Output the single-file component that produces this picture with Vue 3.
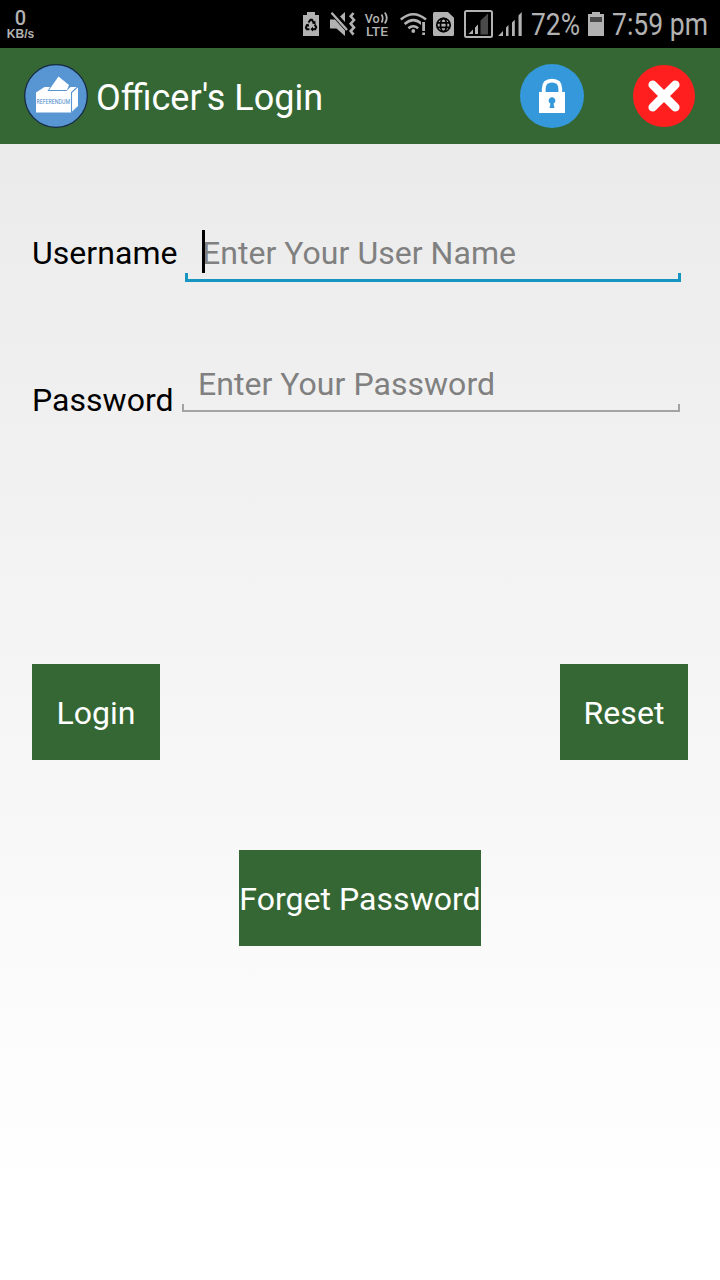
<template>
    <div class="screen">
        <div class="status-bar">
            <div class="net-speed">
                <span class="speed-value">0</span>
                <span class="speed-unit">KB/s</span>
            </div>
            <div class="status-icons">
                <!-- battery saver -->
                <svg class="icon" width="16" height="48" viewBox="303 0 16 48">
                    <path d="M303 15h4v-3h8v3h4v21h-16z" fill="#b2b2b2" />
                    <g fill="none" stroke="#000" stroke-width="2">
                        <path d="M308.500 22.500l2-2.800h1.400l1.800 3" />
                        <path d="M314.700 24.600l1.500 2.700-1 1.900h-3" />
                        <path d="M309.400 29.200h-2.600l-.9-1.800 1.600-2.900" />
                    </g>
                    <path d="M312 23.600l3.600.6-.3-3.600zM313 26.800v4.800l-2.600-2.400zM305.100 25.200l3.400-1.800.7 3.300z" />
                </svg>
                <!-- muted speaker with vibration -->
                <svg class="icon mute" width="26" height="48" viewBox="330 0 26 48">
                    <path d="M330 19.500h5l10 11V36l-8.500-7.500H330z" fill="#b2b2b2" />
                    <path d="M340 16.500l5-4.500v10z" fill="#b2b2b2" />
                    <path d="M331.500 12.800L347 30" stroke="#b2b2b2" stroke-width="2.400" />
                    <path d="M353.500 13l-2.800 3.300 3.300 3.700-3.300 3.700 3.300 3.700-3.300 3.700 2.800 3.500" fill="none" stroke="#b2b2b2" stroke-width="2.600" />
                </svg>
                <svg class="icon volte" width="24" height="48" viewBox="365 0 24 48">
                    <g class="volte-text">
                        <text x="364.700" y="22.700" textLength="15" lengthAdjust="spacingAndGlyphs">Vo</text>
                        <text x="366" y="35.700" textLength="22" lengthAdjust="spacingAndGlyphs">LTE</text>
                    </g>
                    <path d="M381.500 14.500q2.500 4 0 8M384.800 12.500q4 5.500 0 11" fill="none" stroke="#b2b2b2" stroke-width="1.800" />
                </svg>
                <svg class="icon wifi" width="28" height="48" viewBox="400 0 28 48">
                    <g fill="none" stroke="#b2b2b2" stroke-width="2.500">
                        <path d="M400.800 19.500q12.400-10.500 25.200 0" />
                        <path d="M404.600 24q8.700-7.800 17.400 0" />
                        <path d="M408.400 28.300q4.900-4.200 9.800 0" />
                    </g>
                    <circle cx="413.300" cy="31" r="1.900" fill="#b2b2b2" />
                    <path d="M421 20.500h6v11h-6z" />
                    <path d="M422.200 22h2.800v9h-2.800zM422.200 32.500h2.800v2.600h-2.800z" fill="#b2b2b2" />
                </svg>
                <!-- sim data -->
                <svg class="icon sim" width="21" height="48" viewBox="433 0 21 48">
                    <path d="M434.500 12H448l6 5.800v16.700q0 1.500-1.500 1.500h-18q-1.500 0-1.500-1.500v-21q0-1.500 1.500-1.500z" fill="#b2b2b2" />
                    <g fill="none" stroke="#000" stroke-width="1.700">
                        <circle cx="443.500" cy="25" r="6.700" />
                        <ellipse cx="443.500" cy="25" rx="3" ry="6.700" />
                        <path d="M437 22.800h13M437 27.300h13" />
                    </g>
                </svg>
                <svg class="icon boxed" width="29" height="48" viewBox="464 0 29 48">
                    <rect x="465" y="11" width="27" height="26" rx="1.500" fill="none" stroke="#b2b2b2" stroke-width="2" />
                    <path d="M480.500 20.500l7.500-7v21h-7.500z" fill="#4a4a4a" />
                    <path d="M468.500 34l4.500-4.500v4.500zM475 27.500l3-3v9.500h-3z" fill="#b2b2b2" />
                </svg>
                <svg class="icon signal" width="25" height="48" viewBox="498 0 25 48">
                    <path d="M498 36l5-5v5zM506 27.500l2.500-2.500v11h-2.500zM512 22.500l2.800-2.800v16.300h-2.800zM518.500 15.500l3.200-3.500v24h-3.200z" fill="#b2b2b2" />
                </svg>
                <svg class="icon percent" width="49" height="48" viewBox="531 0 49 48">
                    <text class="status-text" x="531" y="35" textLength="49" lengthAdjust="spacingAndGlyphs">72%</text>
                </svg>
                <svg class="icon battery" width="16" height="48" viewBox="588 0 16 48">
                    <path d="M588 14h4v-2h8v2h4v22h-16z" fill="#b2b2b2" />
                    <path d="M590 17h12v5h-12z" fill="#4a4a4a" />
                </svg>
                <svg class="icon clock" width="98" height="48" viewBox="611 0 98 48">
                    <text class="status-text" x="612" y="35" textLength="96" lengthAdjust="spacingAndGlyphs">7:59 pm</text>
                </svg>
            </div>
        </div>

        <header class="title-bar">
            <svg class="logo" width="64" height="64" viewBox="0 0 64 64">
                <circle cx="32" cy="32" r="31.300" fill="#5796d3" stroke="#152a45" stroke-width="1.300" />
                <path d="M12 28.500l8.500-5.500H54v19l-7 6.500H12z" fill="#fff" />
                <path d="M23.500 27l2.500-4h20.500l-4 4z" fill="#5796d3" />
                <path d="M25 26l9.500-13.500L45 21l-2 5z" fill="#fff" />
                <path d="M47.500 48.500V28.500l6.500-6" fill="none" stroke="#5796d3" stroke-width="1.100" />
                <text class="logo-text" x="12.500" y="39.800" textLength="33.500" lengthAdjust="spacingAndGlyphs">REFERENDUM</text>
            </svg>
            <h1 class="title">Officer's Login</h1>
            <button class="round-btn lock-btn" type="button" aria-label="Lock">
                <svg width="64" height="64" viewBox="0 0 64 64">
                    <circle cx="32" cy="32" r="32" fill="#3498db" />
                    <path d="M23.700 30v-5q0-8.300 8.300-8.300t8.300 8.300v5" fill="none" stroke="#fff" stroke-width="3.800" />
                    <path d="M19 28h26v21H19z" fill="#fff" />
                    <path d="M30.300 39.600a3.400 3.400 0 1 1 3.400 0v.8l.8 3.600h-5l.8-3.600z" fill="#3498db" />
                </svg>
            </button>
            <button class="round-btn close-btn" type="button" aria-label="Close">
                <svg width="62" height="62" viewBox="0 0 62 62">
                    <circle cx="31" cy="31" r="31" fill="#ff1f1f" />
                    <path d="M19.700 19.700l22.600 22.600M42.300 19.700L19.700 42.300" stroke="#fff" stroke-width="8.600" stroke-linecap="round" />
                </svg>
            </button>
        </header>

        <main class="form">
            <div class="field user-field">
                <label class="label" for="username">Username</label>
                <div class="input-wrap focused">
                    <input id="username" v-model="username" type="text" placeholder="Enter Your User Name">
                    <span class="caret"></span>
                </div>
            </div>
            <div class="field pass-field">
                <label class="label" for="password">Password</label>
                <div class="input-wrap">
                    <input id="password" v-model="password" type="password" placeholder="Enter Your Password">
                </div>
            </div>
            <div class="actions">
                <button class="btn" type="button">Login</button>
                <button class="btn" type="button" @click="reset">Reset</button>
            </div>
            <button class="btn forget" type="button">Forget Password</button>
        </main>
    </div>
</template>

<script setup>
import { ref } from 'vue'

const username = ref('')
const password = ref('')

const reset = () => {
    username.value = ''
    password.value = ''
}
</script>

<style>
body {
    margin: 0;
}
</style>

<style scoped>
.screen {
    width: 720px;
    height: 1280px;
    display: flex;
    flex-direction: column;
    overflow: hidden;
    font-family: Roboto, sans-serif;
    font-size: 32px;
    line-height: 38px;
    color: #000;
    background: linear-gradient(#e8e8e8, #fff 94%);
}

.status-bar {
    height: 48px;
    display: flex;
    justify-content: space-between;
    background: #000;
    color: #b2b2b2;
}

.net-speed {
    display: flex;
    flex-direction: column;
    align-items: center;
    width: 41px;
    padding-top: 9px;
    font-family: "Liberation Sans", sans-serif;
}

.speed-value {
    font-family: Roboto, sans-serif;
    font-size: 20px;
    font-weight: 500;
    line-height: 19px;
}

.speed-unit {
    font-size: 12px;
    font-weight: bold;
    line-height: 12px;
}

.status-icons {
    display: flex;
    padding-right: 11px;
}

.icon {
    display: block;
    overflow: visible;
}

.mute { margin-left: 11px; }
.volte { margin-left: 9px; }
.wifi { margin-left: 11px; }
.sim { margin-left: 5px; }
.boxed { margin-left: 10px; }
.signal { margin-left: 5px; }
.percent { margin-left: 8px; }
.battery { margin-left: 8px; }
.clock { margin-left: 7px; }

.volte-text {
    font-size: 13.5px;
    font-weight: 500;
    fill: #b2b2b2;
}

.status-text {
    font-size: 30.5px;
    fill: #b2b2b2;
}

.title-bar {
    height: 96px;
    box-sizing: border-box;
    padding: 0 25px 0 24px;
    display: flex;
    align-items: center;
    background: #356734;
    color: #fff;
}

.logo-text {
    font-size: 6.5px;
    fill: #4a8acb;
}

.title {
    flex: 1;
    margin: 4px 0 0 8px;
    font-size: 36px;
    font-weight: 400;
    line-height: 42px;
}

.round-btn {
    padding: 0;
    border: 0;
    background: none;
    display: flex;
}

.close-btn {
    margin-left: 49px;
}

.form {
    display: flex;
    flex-direction: column;
    padding: 88px 32px 0;
    letter-spacing: 0.04px;
}

.field {
    display: flex;
}

.user-field {
    height: 50px;
}

.pass-field {
    height: 50px;
    margin-top: 80px;
}

.label {
    flex: none;
    width: 153px;
    padding-top: 2px;
}

.pass-field .label {
    width: 150px;
    padding-top: 19px;
}

.input-wrap {
    position: relative;
    width: 496px;
    height: 50px;
}

.pass-field .input-wrap {
    width: 498px;
}

/* bracket shaped underline */
.input-wrap::after {
    content: "";
    position: absolute;
    left: 0;
    right: 0;
    bottom: 0;
    height: 6px;
    border: 2px solid #a3a3a3;
    border-top: 0;
}

.focused::after {
    border-color: #1795c1;
    border-width: 0 3px 3px;
}

input {
    width: 100%;
    height: 38px;
    box-sizing: border-box;
    margin: 2px 0 0;
    padding: 0 16px;
    display: block;
    border: 0;
    outline: 0;
    background: none;
    font: inherit;
    letter-spacing: inherit;
}

.focused input {
    padding-left: 17px;
}

.pass-field input {
    margin-top: 3px;
}

input::placeholder {
    color: #808080;
    opacity: 1;
}

.caret {
    position: absolute;
    left: 17px;
    top: -2px;
    width: 3px;
    height: 43px;
    background: #000;
}

.actions {
    display: flex;
    justify-content: space-between;
    margin-top: 252px;
}

.btn {
    width: 128px;
    height: 96px;
    padding: 2px 0 0;
    border: 0;
    background: #356734;
    color: #fff;
    font: inherit;
    letter-spacing: inherit;
    white-space: nowrap;
}

.forget {
    width: 242px;
    margin-top: 90px;
    align-self: center;
}
</style>
